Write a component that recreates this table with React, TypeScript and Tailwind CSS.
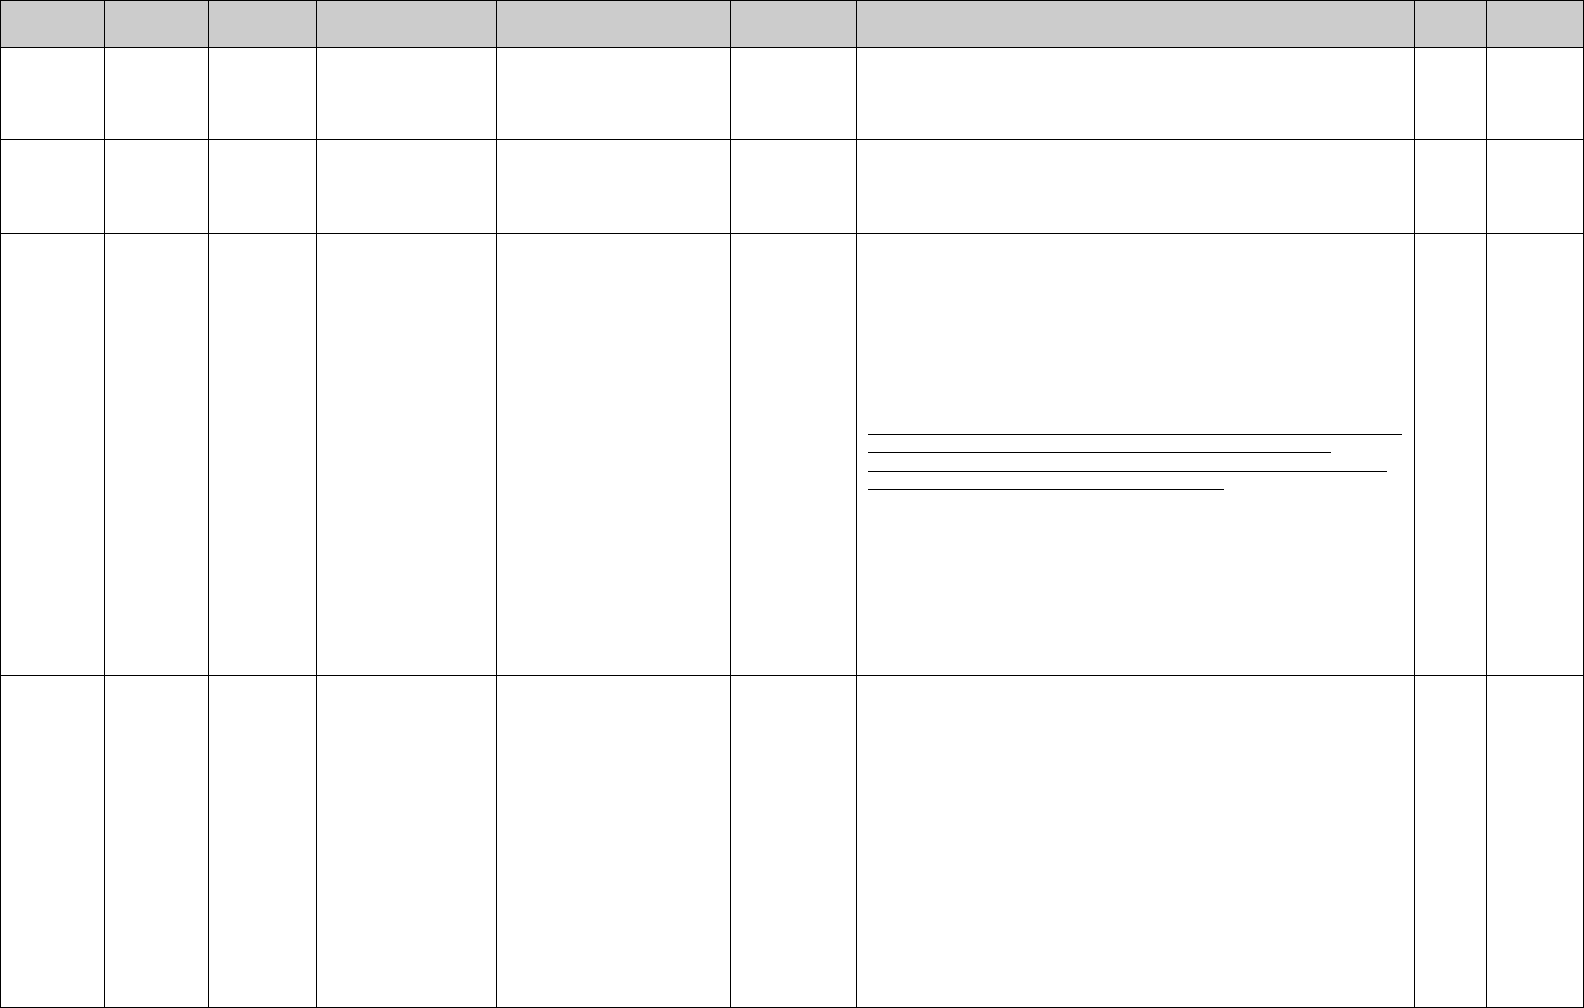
const widths = ['w-[104px]', 'w-[104px]', 'w-[108px]', 'w-[180px]', 'w-[234px]', 'w-[126px]', 'w-[558px]', 'w-[72px]', 'w-[97px]'];

const rows = ['h-[92px]', 'h-[94px]', 'h-[442px]', 'h-[332px]'];

const UnderlinedLines = () => (
    <div className="pt-[200px] pl-[11px]">
        <div className="h-px w-[534px] bg-black" />
        <div className="h-px w-[463px] bg-black mt-[17px]" />
        <div className="h-px w-[519px] bg-black mt-[18px]" />
        <div className="h-px w-[356px] bg-black mt-[17px]" />
    </div>
);

const App = () => {
    return (
        <div className="w-[1584px] h-[1008px] bg-white overflow-hidden font-['Liberation_Sans',sans-serif]">
            <div className="border-l border-t border-black inline-block">
                <div className="flex h-[47px]">
                    {widths.map((w, i) => (
                        <div key={i} className={`${w} h-full bg-[#cccccc] border-r border-b border-black`} />
                    ))}
                </div>
                {rows.map((h, r) => (
                    <div key={r} className={`flex ${h}`}>
                        {widths.map((w, i) => (
                            <div key={i} className={`${w} h-full bg-white border-r border-b border-black`}>
                                {r === 2 && i === 6 && <UnderlinedLines />}
                            </div>
                        ))}
                    </div>
                ))}
            </div>
        </div>
    );
};

export default App;
